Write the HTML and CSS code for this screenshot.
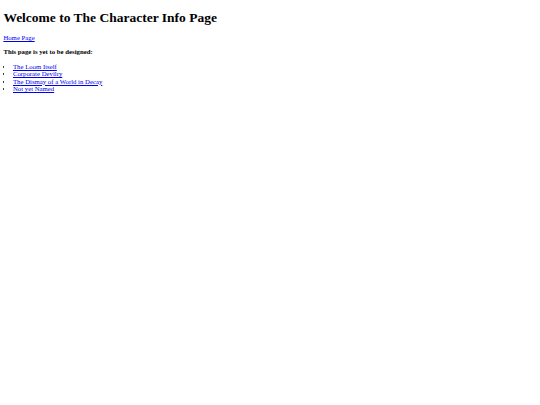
FILE: index.html
```html
<!DOCTYPE html>
<html>
<head>
<meta charset="utf-8">
<title>Character Info</title>
<link rel="stylesheet" href="styles.css">
</head>
<body>
<h1 class="title">Welcome to The Character Info Page</h1>
<a class="link" href="#">Home Page</a>
<h4 class="sub">This page is yet to be designed:</h4>
<ul class="list">
<li><a class="link" href="#">The Loom Itself</a></li>
<li><a class="link" href="#">Corporate Devilry</a></li>
<li><a class="link" href="#">The Dismay of a World in Decay</a></li>
<li><a class="link" href="#">Not yet Named</a></li>
</ul>
</body>
</html>
```
FILE: styles.css
```css
html { background: #fff; }
body {
  margin: 3.375px;
  font-family: "Liberation Serif", "Times New Roman", serif;
  font-size: 6.75px;
  color: #000;
}
.title {
  font-size: 13.5px;
  margin: 7px 0 8px;
}
.sub {
  font-size: 6.75px;
  margin: 6.5px 0 8px;
}
.list {
  margin: 8px 0;
  padding-left: 9.6px;
  line-height: 7.5px;
}
.link { color: #0000ee; }
```
